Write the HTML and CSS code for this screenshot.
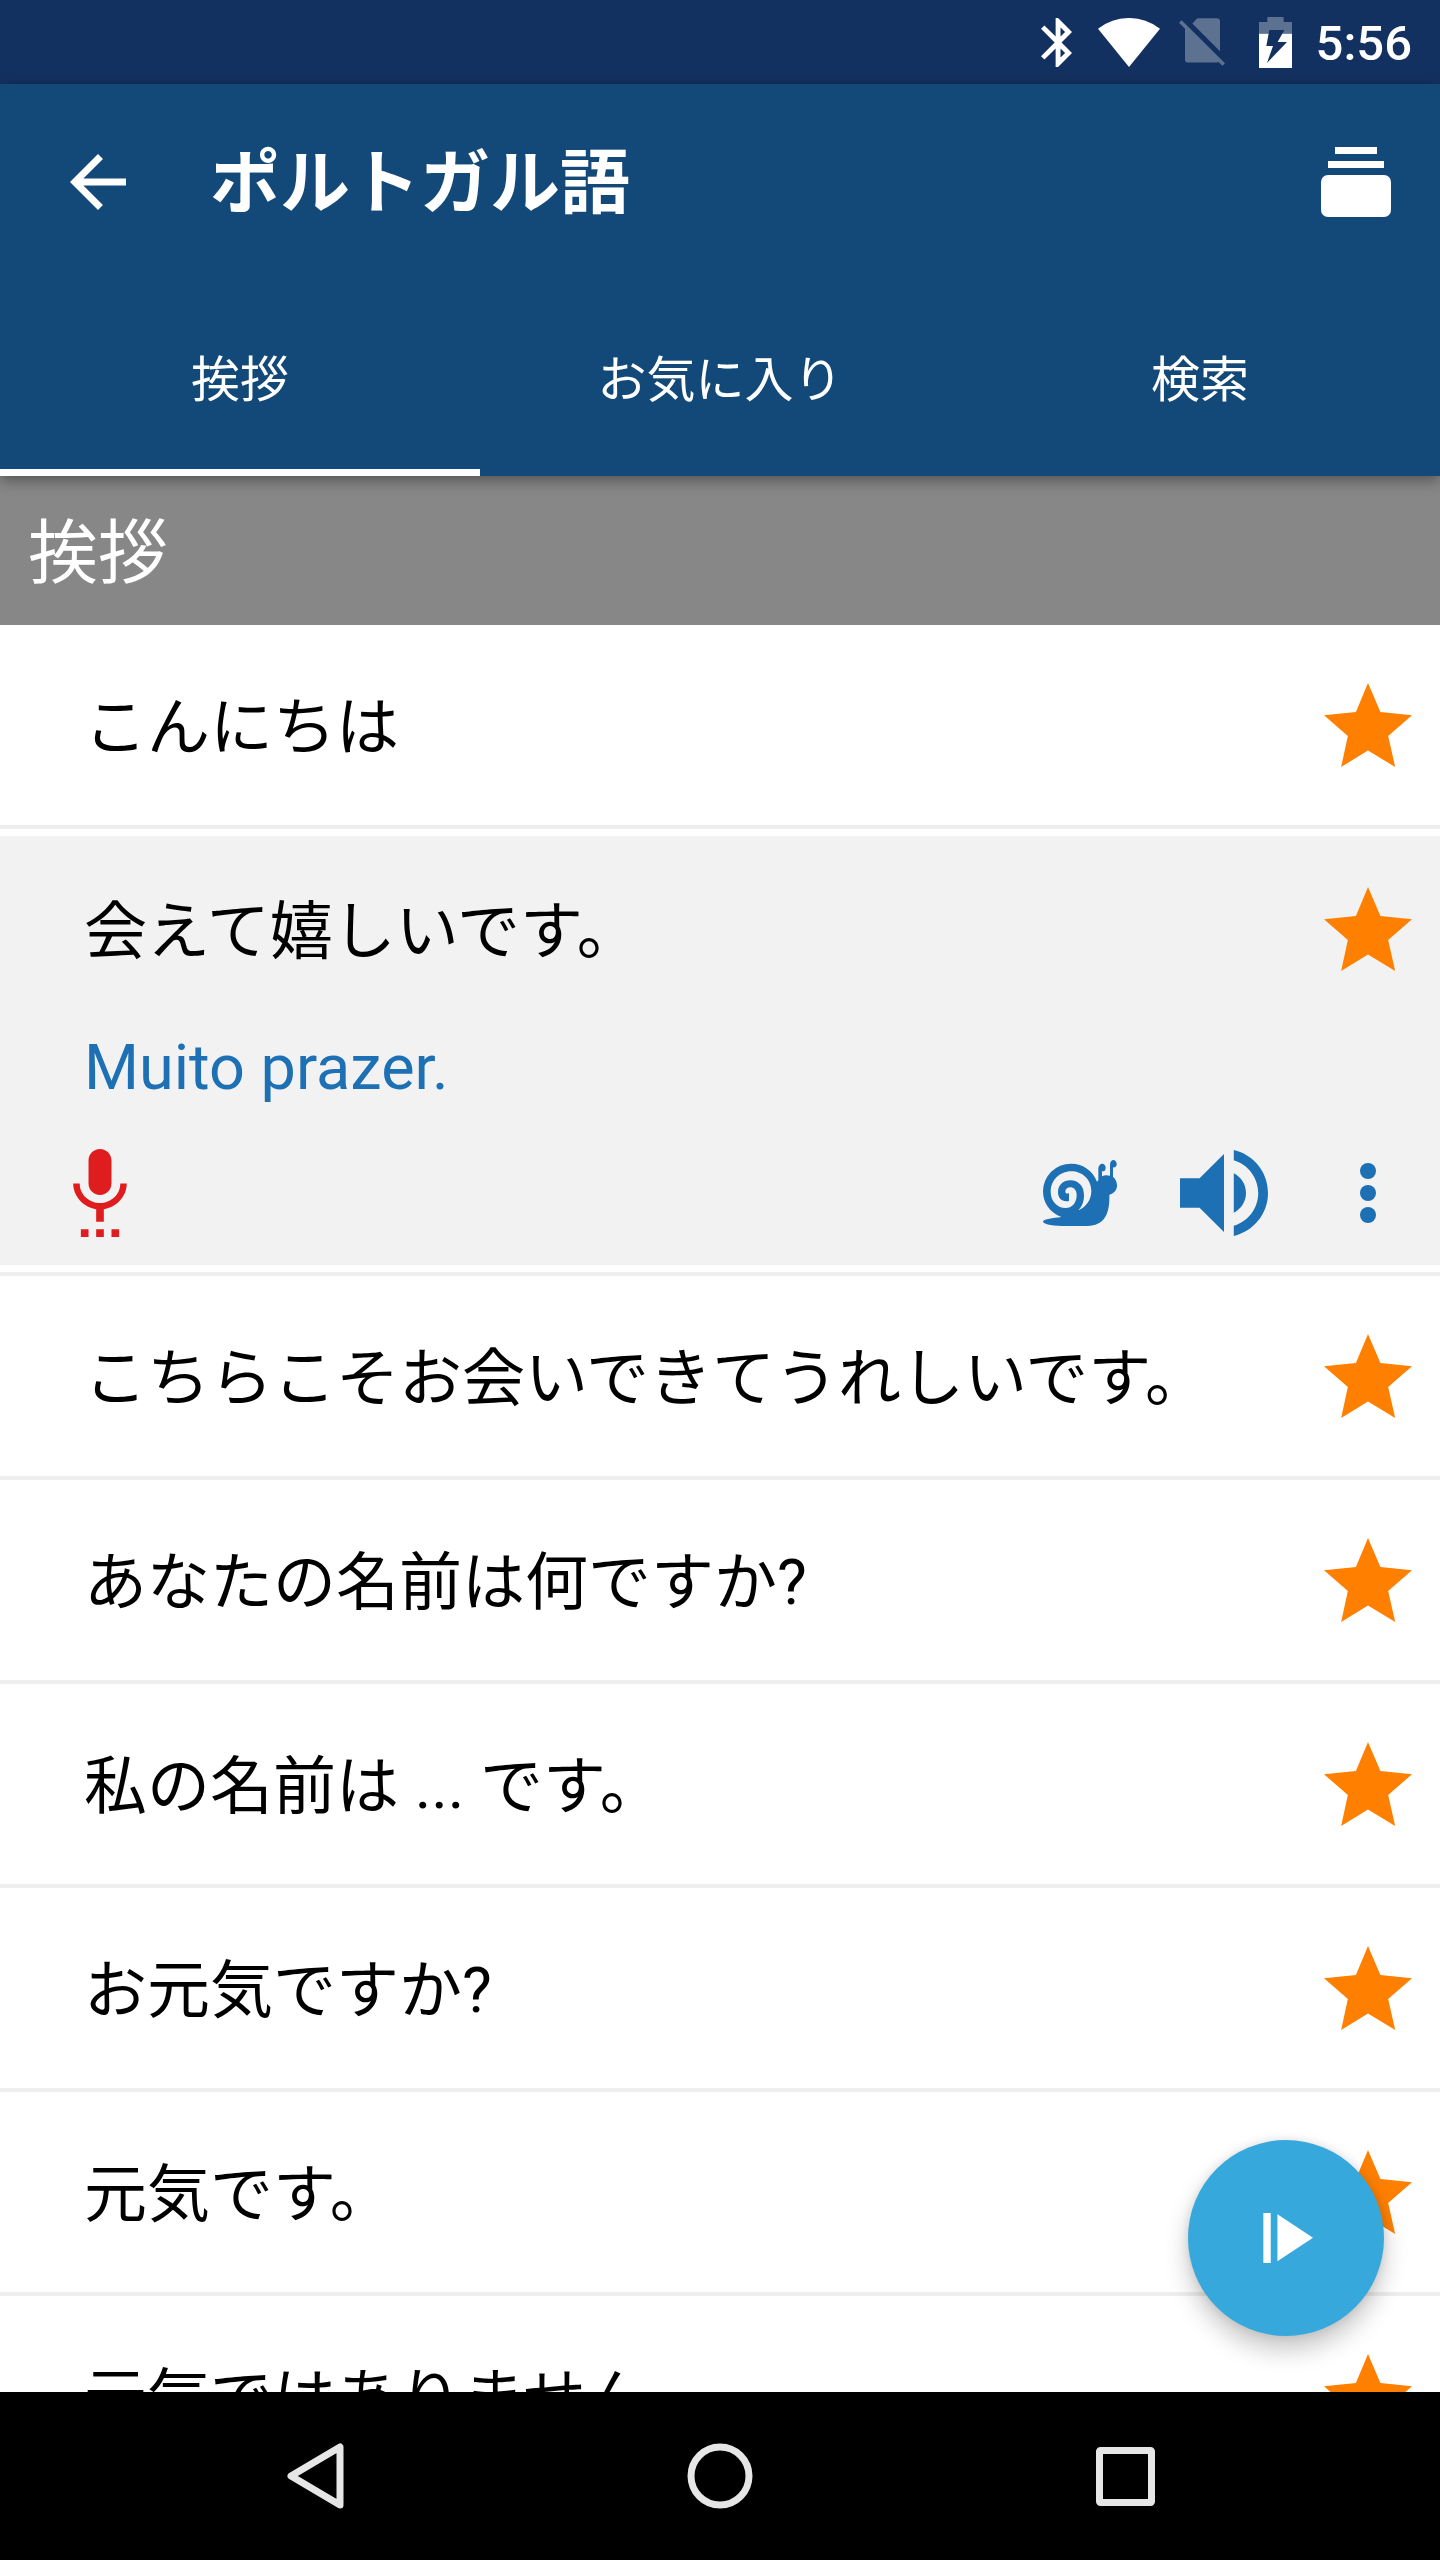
FILE: index.html
```html
<!DOCTYPE html>
<html lang="ja">
<head>
<meta charset="utf-8">
<meta name="viewport" content="width=device-width, initial-scale=1">
<title>ポルトガル語</title>
<link rel="stylesheet" href="styles.css">
</head>
<body>
<svg class="sprite" aria-hidden="true">
  <symbol id="star" viewBox="493 190 262 250"><path d="M624 190L661 276L755 286L684 348L705 440L624 391L544 440L564 348L493 286L588 276Z"/></symbol>
</svg>

<div class="status-bar">
  <div class="status-icons">
    <svg width="31" height="49" viewBox="5 2 12.71 20"><path d="M17.71 7.71L12 2h-1v7.59L6.41 5 5 6.41 10.59 12 5 17.59 6.41 19 11 14.41V22h1l5.71-5.71-4.3-4.29 4.3-4.29zM13 5.83l1.88 1.88L13 9.59V5.83zm1.88 10.46L13 18.17v-3.76l1.88 1.88z"/></svg>
    <svg width="62" height="49" viewBox="198 21 186 147"><path d="M291 168L198 53A151 151 0 0 1 384 53Z"/></svg>
    <svg class="dim" width="46" height="48" viewBox="447 29 138 143"><path d="M502 29H560Q570 29 570 39V128L487 45ZM465 52L570 157Q569 162 560 162H475Q465 162 465 152ZM447 43L455 35L585 164L577 172Z"/></svg>
    <svg width="33" height="51" viewBox="681 18 99 153"><path class="dim" d="M706 18H755V33H780V68H681V33H706Z"/><path d="M681 68H780V171H681Z"/><path class="bolt" d="M712 57H757L737 93H765L705 156L723 105H703Z"/></svg>
  </div>
  <time class="clock">5:56</time>
</div>

<header class="app-bar">
  <div class="toolbar">
    <button class="icon-button" type="button" aria-label="戻る"><svg width="56" height="56" viewBox="4 4 16 16"><path d="M20 11H7.83l5.59-5.59L12 4l-8 8 8 8 1.41-1.41L7.83 13H20v-2z"/></svg></button>
    <h1 class="title">ポルトガル語</h1>
    <button class="icon-button" type="button" aria-label="カード"><svg width="70" height="70" viewBox="0 0 70 70"><path d="M14 0H56V7H14ZM7 14H63V21H7Z"/><rect y="28" width="70" height="42" rx="7"/></svg></button>
  </div>
  <nav class="tabs">
    <button class="tab tab-active" type="button">挨拶</button>
    <button class="tab" type="button">お気に入り</button>
    <button class="tab" type="button">検索</button>
  </nav>
</header>

<main class="content">
  <h2 class="section">挨拶</h2>
  <ul class="phrases">
    <li class="phrase"><div class="line"><span class="text">こんにちは</span><button class="star" type="button" aria-label="お気に入り"><svg><use href="#star"/></svg></button></div></li>
    <li class="phrase phrase-open">
      <div class="card">
        <div class="line"><span class="text">会えて嬉しいです。</span><button class="star" type="button" aria-label="お気に入り"><svg><use href="#star"/></svg></button></div>
        <p class="translation" lang="pt">Muito prazer.</p>
        <div class="actions">
          <button class="icon-button record" type="button" aria-label="録音"><svg width="54" height="88" viewBox="5 1 14 23"><path d="M7 24h2v-2H7v2zm5-11c1.66 0 3-1.34 3-3V4c0-1.66-1.34-3-3-3S9 2.34 9 4v6c0 1.66 1.34 3 3 3zm-1 11h2v-2h-2v2zm4 0h2v-2h-2v2zm4-14h-1.7c0 3-2.54 5.1-5.3 5.1S6.700 13 6.700 10H5c0 3.410 2.720 6.230 6 6.720V20h2v-3.280c3.280-.490 6-3.310 6-6.720z"/></svg></button>
          <button class="icon-button snail" type="button" aria-label="ゆっくり再生"><svg width="74" height="66" viewBox="21 23 222 198"><path fill-rule="evenodd" d="M21 207C25 199 50 198 76 194C40 180 21 150 21 117A84 83 0 0 1 105 34C142 34 170 55 183 88L187 84V50C187 40 193 34 200 34C209 36 212 48 206 55C203 58 200 57 198 56V72Q208 66 222 70V38C222 28 227 23 233 23C241 24 245 36 240 42C238 46 234 46 231 45V73C240 80 243 92 243 100C243 113 233 124 220 127C222 185 205 220 155 221H80C40 220 21 215 21 207ZM127 174C150 165 166 142 166 117C166 80 138 57 106 57C70 57 44 85 44 118C44 147 65 167 89 167C110 167 122 150 122 128C122 113 113 105 103 105C94 105 88 110 88 118C88 123 92 125 99 123V146C78 150 66 138 66 119C66 98 82 84 103 84C128 84 144 103 144 128C144 148 138 162 127 174Z"/></svg></button>
          <button class="icon-button" type="button" aria-label="再生"><svg width="88" height="86" viewBox="3 3.230 18 17.540"><path d="M3 9v6h4l5 5V4L7 9H3zm13.500 3c0-1.770-1.020-3.290-2.500-4.030v8.050c1.480-.730 2.500-2.250 2.500-4.020zM14 3.230v2.060c2.890.860 5 3.540 5 6.710s-2.110 5.850-5 6.710v2.060c4.010-.910 7-4.490 7-8.770s-2.990-7.860-7-8.770z"/></svg></button>
          <button class="icon-button more" type="button" aria-label="その他"><svg width="16" height="60" viewBox="0 0 16 60"><circle cx="8" cy="8" r="8"/><circle cx="8" cy="30" r="8"/><circle cx="8" cy="52" r="8"/></svg></button>
        </div>
      </div>
    </li>
    <li class="phrase"><div class="line"><span class="text">こちらこそお会いできてうれしいです。</span><button class="star" type="button" aria-label="お気に入り"><svg><use href="#star"/></svg></button></div></li>
    <li class="phrase"><div class="line"><span class="text">あなたの名前は何ですか?</span><button class="star" type="button" aria-label="お気に入り"><svg><use href="#star"/></svg></button></div></li>
    <li class="phrase"><div class="line"><span class="text">私の名前は ... です。</span><button class="star" type="button" aria-label="お気に入り"><svg><use href="#star"/></svg></button></div></li>
    <li class="phrase"><div class="line"><span class="text">お元気ですか?</span><button class="star" type="button" aria-label="お気に入り"><svg><use href="#star"/></svg></button></div></li>
    <li class="phrase"><div class="line"><span class="text">元気です。</span><button class="star" type="button" aria-label="お気に入り"><svg><use href="#star"/></svg></button></div></li>
    <li class="phrase"><div class="line"><span class="text">元気ではありません。</span><button class="star" type="button" aria-label="お気に入り"><svg><use href="#star"/></svg></button></div></li>
  </ul>
  <button class="fab" type="button" aria-label="すべて再生"><svg width="53" height="50" viewBox="359 340 158 149"><path d="M369 340H391V489H369ZM411 344L517 414L411 484Z"/></svg></button>
</main>

<nav class="nav-bar">
  <button class="nav-button" type="button" aria-label="戻る"><svg width="57" height="66" viewBox="0 0 57 66"><path d="M53 4V62L4 33Z"/></svg></button>
  <button class="nav-button" type="button" aria-label="ホーム"><svg width="66" height="66" viewBox="0 0 66 66"><circle cx="33" cy="33" r="29"/></svg></button>
  <button class="nav-button" type="button" aria-label="履歴"><svg width="59" height="59" viewBox="0 0 59 59"><rect x="3.500" y="3.500" width="52" height="52" rx="1"/></svg></button>
</nav>
</body>
</html>
```
FILE: styles.css
```css
* {
  box-sizing: border-box;
}

body {
  margin: 0;
  height: 100vh;
  display: flex;
  flex-direction: column;
  background: #fff;
  color: #000;
  font-family: Roboto, "Noto Sans CJK JP", sans-serif;
}

button {
  padding: 0;
  border: 0;
  background: none;
  color: inherit;
  font: inherit;
}

svg {
  display: block;
  fill: currentColor;
}

h1,
h2,
p,
ul {
  margin: 0;
  padding: 0;
}

.sprite {
  position: absolute;
  width: 0;
  height: 0;
}

/* Status bar */
.status-bar {
  flex: none;
  display: flex;
  align-items: center;
  justify-content: flex-end;
  gap: 4px;
  height: 84px;
  padding-right: 28px;
  background: #133160;
  color: #fff;
}

.status-icons {
  display: grid;
  grid-template-columns: repeat(4, 73px);
  align-items: center;
  justify-items: center;
}

.dim {
  fill: #5d7190;
}

.bolt {
  fill: #133160;
}

.clock {
  padding-top: 4px;
  font-size: 49px;
  font-weight: 500;
  line-height: 80px;
}

/* App bar */
.app-bar {
  flex: none;
  position: relative;
  z-index: 1;
  background: #134978;
  color: #fff;
  box-shadow: 0 4px 14px rgba(0, 0, 0, 0.4);
}

.toolbar {
  display: flex;
  align-items: center;
  height: 196px;
  padding: 0 49px 0 70px;
}

.title {
  flex: 1;
  padding: 4px 0 0 84px;
  font-size: 70px;
  font-weight: 700;
  line-height: 84px;
}

.tabs {
  display: grid;
  grid-template-columns: repeat(3, 1fr);
  height: 196px;
}

.tab {
  padding-bottom: 6px;
  border: solid transparent;
  border-width: 7px 0;
  font-size: 49px;
}

.tab-active {
  border-bottom-color: #fff;
}

/* Phrase list */
.content {
  flex: 1;
  min-height: 0;
  position: relative;
  overflow: hidden;
}

.section {
  padding: 8px 28px 0;
  background: #878787;
  color: #fff;
  font-size: 70px;
  font-weight: 400;
  line-height: 141px;
}

.phrases {
  list-style: none;
}

.phrase {
  border-bottom: 4px solid #eee;
}

.phrase-open {
  padding: 7px 0;
}

.card {
  background: #f2f2f2;
}

.line {
  display: flex;
  align-items: center;
  justify-content: space-between;
  height: 200px;
  padding: 0 28px 0 84px;
}

.card .line {
  height: 186px;
}

.text,
.translation {
  font-size: 63px;
  line-height: 92px;
}

.text {
  padding-top: 6px;
}

.star svg {
  width: 88px;
  height: 84px;
  fill: #ff8000;
}

.translation {
  padding: 0 84px;
  color: #1c70b3;
}

.actions {
  display: flex;
  align-items: center;
  height: 151px;
  padding: 7px 64px 0 73px;
  color: #1c70b3;
}

.record {
  margin-right: auto;
  color: #df1d1f;
}

.snail {
  margin-right: 63px;
}

.more {
  margin-left: 92px;
}

.fab {
  position: absolute;
  right: 56px;
  bottom: 56px;
  display: grid;
  place-items: center;
  width: 196px;
  height: 196px;
  border-radius: 50%;
  background: #37a8db;
  color: #fff;
  box-shadow: 0 14px 24px rgba(0, 0, 0, 0.22), 0 0 10px rgba(0, 0, 0, 0.1);
}

/* System navigation */
.nav-bar {
  flex: none;
  display: flex;
  justify-content: center;
  height: 168px;
  background: #000;
}

.nav-button {
  display: grid;
  place-items: center;
  width: 28.125%;
}

.nav-button svg {
  fill: none;
  stroke: #e6e6e6;
  stroke-width: 7px;
  stroke-linejoin: round;
}
```
